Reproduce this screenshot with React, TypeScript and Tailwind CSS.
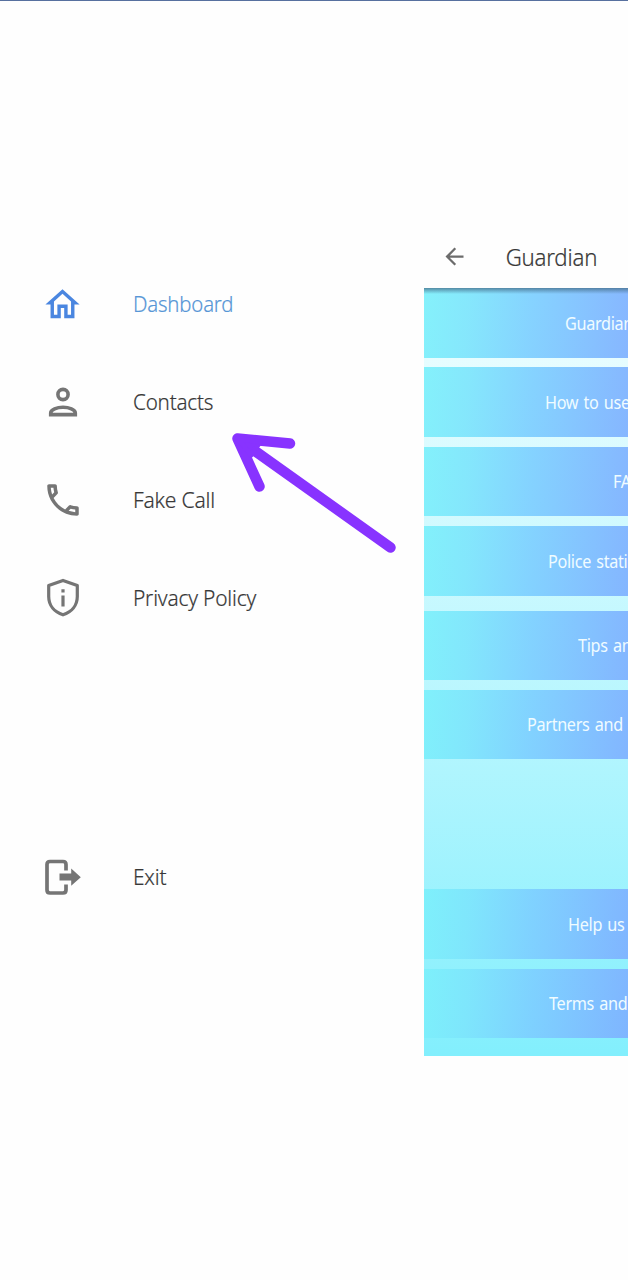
import React from "react";

const HomeIcon = () => (
  <svg viewBox="0 0 24 24" className="size-[41px] text-[#4a86e0]" fill="currentColor">
    <path d="M12 5.690l5 4.500V18h-2v-6H9v6H7v-7.810l5-4.500M12 3L2 12h3v8h6v-6h2v6h6v-8h3L12 3z" />
  </svg>
);

const PersonIcon = () => (
  <svg viewBox="0 0 42 42" className="size-[42px]" fill="none" stroke="currentColor" strokeWidth="3.6">
    <circle cx="21" cy="13.5" r="5.1" />
    <path d="M8.7 33.600V32C8.700 28.500 15 26.200 21 26.200S33.300 28.500 33.300 32V33.600Z" />
  </svg>
);

const PhoneIcon = () => (
  <svg viewBox="0 0 24 24" className="size-[42px]" fill="currentColor">
    <path d="M6.540 5c.06.89.21 1.760.45 2.590l-1.200 1.200c-.41-1.200-.67-2.470-.76-3.790h1.510m9.860 12.020c.85.24 1.720.39 2.600.45v1.490c-1.320-.09-2.590-.35-3.800-.75l1.200-1.190M7.500 3H4c-.55 0-1 .45-1 1 0 9.390 7.610 17 17 17 .55 0 1-.45 1-1v-3.490c0-.55-.45-1-1-1-1.240 0-2.450-.2-3.570-.57-.1-.04-.21-.05-.31-.05-.26 0-.51.1-.71.29l-2.200 2.200c-2.830-1.450-5.150-3.760-6.590-6.590l2.200-2.200c.28-.28.36-.67.25-1.020C8.700 6.450 8.500 5.250 8.500 4c0-.55-.45-1-1-1z" />
  </svg>
);

const ShieldIcon = () => (
  <svg viewBox="0 0 42 42" className="size-[42px]" fill="none" stroke="currentColor" strokeWidth="3.200">
    <path d="M21 3.400L35.300 8.500V19.500C35.300 28.500 29.500 35 21 37.800C12.500 35 6.700 28.500 6.700 19.500V8.500Z" strokeLinejoin="round" />
    <path d="M21 12.300V15.600M21 18.500V29.500" />
  </svg>
);

const ExitIcon = () => (
  <svg viewBox="0 0 42 42" className="size-[42px]" fill="none">
    <path d="M24 14.500V8.500Q24 5.500 21 5.500H8Q5 5.500 5 8.500V34Q5 37 8 37H21Q24 37 24 34V28.500" stroke="currentColor" strokeWidth="3.700" />
    <path d="M17.500 17.600H29.200V12.500L38.800 21.200L29.200 29.800V24.600H17.500Z" fill="currentColor" />
  </svg>
);

type Item = { label: string; icon: React.ReactNode; text: string };

const items: Item[] = [
  { label: "Dashboard", icon: <HomeIcon />, text: "text-[#5796d6] scale-x-[0.925]" },
  { label: "Contacts", icon: <PersonIcon />, text: "text-[#383838] scale-x-[0.935]" },
  { label: "Fake Call", icon: <PhoneIcon />, text: "text-[#383838] scale-x-[0.958]" },
  { label: "Privacy Policy", icon: <ShieldIcon />, text: "text-[#383838] scale-x-[0.95]" },
];

const MenuRow = ({ item }: { item: Item }) => (
  <li className="flex h-[98px] items-center text-[#757575]">
    <span className="flex w-[91px] shrink-0 items-center">{item.icon}</span>
    <span
      className={`origin-left pb-[2px] text-[22px] leading-none font-light tracking-[-0.2px] [-webkit-text-stroke:0.2px_currentColor] ${item.text}`}
    >
      {item.label}
    </span>
  </li>
);

const tiles = [
  { label: "Guardian", box: "h-[70px] pl-[141px]" },
  { label: "How to use", box: "mt-[9px] h-[70px] pl-[121px]" },
  { label: "FAQ", box: "mt-[10px] h-[69px] pl-[189px]" },
  { label: "Police stations", box: "mt-[10px] h-[70px] pl-[124px]" },
  { label: "Tips and tricks", box: "mt-[15px] h-[69px] pl-[154px]" },
  { label: "Partners and contributors", box: "mt-[10px] h-[69px] pl-[103px]" },
  { label: "Help us improve", box: "mt-[130px] h-[70px] pl-[144px]" },
  { label: "Terms and conditions", box: "mt-[10px] h-[69px] pl-[125px]" },
];

export default function App() {
  return (
    <div className="relative flex h-[1280px] w-[628px] overflow-hidden border-t border-[#57709f] bg-[#fefefe] font-['Noto_Sans','Open_Sans',sans-serif]">
      <nav className="w-[424px] shrink-0 pt-[254px] pl-[41.5px]">
        <ul>
          {items.map((item) => (
            <MenuRow key={item.label} item={item} />
          ))}
        </ul>
        <ul className="mt-[181px]">
          <MenuRow item={{ label: "Exit", icon: <ExitIcon />, text: "text-[#383838] scale-x-[0.95]" }} />
        </ul>
      </nav>

      <main className="w-[204px] overflow-hidden pt-[225px]">
        <header className="flex h-[62px] items-center pl-[17px] text-[#6c6c6c]">
          <svg viewBox="0 0 24 24" className="mb-[2px] size-[27px]" fill="currentColor">
            <path d="M20 11H7.830l5.590-5.590L12 4l-8 8 8 8 1.410-1.410L7.830 13H20v-2z" />
          </svg>
          <h1 className="origin-left scale-x-[0.965] pl-[39px] text-[23px] leading-none font-light tracking-[-0.2px] text-[#383838] [-webkit-text-stroke:0.2px_currentColor]">
            Guardian
          </h1>
        </header>
        <div className="relative h-[768px] bg-linear-to-b from-[#effeff] to-[#82effd]">
          {tiles.map((tile) => (
            <div
              key={tile.label}
              className={`flex items-center overflow-hidden bg-[linear-gradient(95deg,#7cf0fbeb_0%,#7de5fceb_22%,#7dcfffeb_52%,#7eb0ffeb_100%)] text-[18px] leading-none whitespace-nowrap text-[#f0fcff] ${tile.box}`}
            >
              <span className="origin-left scale-x-[0.9] pb-px tracking-[-0.35px] [word-spacing:1.5px]">{tile.label}</span>
            </div>
          ))}
          <div className="absolute inset-x-0 top-0 h-[6px] bg-linear-to-b from-[#47728f]/80 to-transparent" />
        </div>
      </main>

      <svg
        viewBox="0 0 190 145"
        className="absolute top-[419px] left-[220px] h-[145px] w-[190px]"
        fill="none"
        stroke="#8833ff"
        strokeWidth="10.500"
        strokeLinecap="round"
        strokeLinejoin="round"
      >
        <path d="M170.500 127.500L17.500 18.500M70 23.500L17.500 18.500L39.500 66.500" />
        <path d="M17.500 18.500L40 22L31 35Z" fill="#8833ff" strokeWidth="5" />
      </svg>
    </div>
  );
}
